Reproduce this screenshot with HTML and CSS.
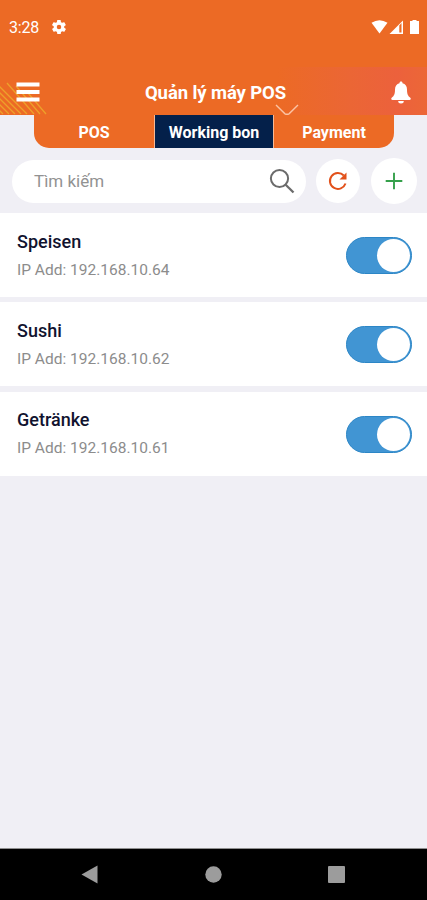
FILE: index.html
```html
<!DOCTYPE html>
<html lang="vi">
<head>
<meta charset="utf-8">
<title>Quản lý máy POS</title>
<link rel="stylesheet" href="styles.css">
</head>
<body>
<div class="app">
  <header class="header">
    <div class="status">
      <span class="time">3:28</span>
      <svg class="gear" width="14" height="14" viewBox="2 2 20 20" fill="#fff"><path d="M19.4 13a7.5 7.5 0 0 0 0-2l2.1-1.6a.5.5 0 0 0 .1-.7l-2-3.4a.5.5 0 0 0-.6-.2l-2.5 1a7 7 0 0 0-1.7-1l-.4-2.7a.5.5 0 0 0-.5-.4h-4a.5.5 0 0 0-.5.4L9 5.1a7 7 0 0 0-1.7 1l-2.5-1a.5.5 0 0 0-.6.2l-2 3.4a.5.5 0 0 0 .1.7L4.500 11a7.500 7.500 0 0 0 0 2l-2.100 1.600a.5.5 0 0 0-.1.7l2 3.400a.5.5 0 0 0 .6.2l2.500-1a7 7 0 0 0 1.700 1l.4 2.700a.5.5 0 0 0 .5.4h4a.5.5 0 0 0 .5-.4l.4-2.700a7 7 0 0 0 1.700-1l2.500 1a.5.5 0 0 0 .6-.2l2-3.400a.5.5 0 0 0-.1-.7zM12 15.200a3.200 3.200 0 1 1 0-6.400 3.200 3.200 0 0 1 0 6.400z"/></svg>
      <svg class="signals" width="50" height="16" viewBox="371 19 50 16" fill="#fff"><path d="M371.500 22.800Q379.500 17.500 387.500 22.800L379.500 33.500z"/><path d="M403 20.500V34H389.500z"/><path d="M399.300 25.500v7h2.200v-9.500z" fill="#ec6a25"/><path d="M412.500 20h4v1h2.500v13h-9V21h2.500z"/></svg>
    </div>
    <div class="titlebar">
      <svg class="stripes" width="52" height="36" viewBox="0 0 52 36" fill="none" stroke="#eda02a" stroke-width="1.300"><path d="M-2 6l29 29M-2 12l23 23M-2 18l17 17M-2 24l11 11M-2 30l5 5M7 4l27 31M16 7l24 28M28 14l18 21"/></svg>
      <svg class="menu" width="24" height="20" viewBox="0 0 24 20" fill="#fff"><path d="M.5.500h23v4H.5zM.5 8h23v4H.5zM.5 15.500h23v4H.5z"/></svg>
      <h1>Quản lý máy POS</h1>
      <svg class="bell" width="20" height="23" viewBox="0 0 20 23" fill="#fff"><path d="M10 .5c1 0 1.500.6 1.500 1.700 3 .8 4.500 3 4.500 6.300 0 4.800 1 6.500 3.300 8.200.8.700.6 2.300-.7 2.300H1.400C.1 19-.1 17.400.7 16.700 3 15 4 13.300 4 8.500c0-3.300 1.500-5.500 4.500-6.300C8.500 1.100 9 .5 10 .5zM7.200 20h5.600a2.800 2.500 0 0 1-5.600 0z"/></svg>
      <svg class="chevron" width="24" height="11" viewBox="0 0 24 11" fill="none" stroke="#fbc3a4" stroke-width="1.400"><path d="M1 1l9 8.800q2 1 4 0L23 1"/></svg>
    </div>
  </header>
  <nav class="tabs">
    <div class="tab">POS</div>
    <div class="tab active">Working bon</div>
    <div class="tab">Payment</div>
  </nav>
  <div class="tools">
    <div class="search">
      <span>Tìm kiếm</span>
      <svg width="26" height="26" viewBox="0 0 26 26" fill="none" stroke="#6b6b6b" stroke-width="2"><circle cx="10.500" cy="10.500" r="8.600"/><path d="M16.700 16.700l7.800 7.800" stroke-width="2.300"/></svg>
    </div>
    <div class="round refresh">
      <svg width="20" height="20" viewBox="0 0 20 20" fill="none" stroke="#e2511b" stroke-width="2"><path d="M17.500 12.500A8 8 0 1 1 15.800 4.500"/><path d="M18.500 1.500v7h-7z" fill="#e2511b" stroke="none"/></svg>
    </div>
    <div class="round add">
      <svg width="18" height="18" viewBox="0 0 18 18" stroke="#35a04b" stroke-width="1.900"><path d="M9 .7v16.600M.7 9h16.600"/></svg>
    </div>
  </div>
  <main class="list">
    <div class="card"><div><h2>Speisen</h2><p>IP Add: 192.168.10.64</p></div><div class="toggle"><i></i></div></div>
    <div class="card"><div><h2>Sushi</h2><p>IP Add: 192.168.10.62</p></div><div class="toggle"><i></i></div></div>
    <div class="card"><div><h2>Getränke</h2><p>IP Add: 192.168.10.61</p></div><div class="toggle"><i></i></div></div>
  </main>
  <footer class="navbar">
    <svg width="17" height="19" viewBox="0 0 17 19" fill="#9c9c9c"><path d="M.5 9.500L16.500.500v18z"/></svg>
    <svg width="17" height="17" viewBox="0 0 17 17" fill="#9c9c9c"><circle cx="8.500" cy="8.500" r="8.200"/></svg>
    <svg width="17" height="17" viewBox="0 0 17 17" fill="#9c9c9c"><rect width="17" height="17" rx="1"/></svg>
  </footer>
</div>
</body>
</html>
```
FILE: styles.css
```css
* { box-sizing: border-box; }
body { margin: 0; font-family: Roboto, "Liberation Sans", sans-serif; }
h1, h2, p { margin: 0; }
svg { display: block; flex: none; }
.app {
  width: 427px;
  height: 900px;
  display: flex;
  flex-direction: column;
  background: #f0eff5;
  overflow: hidden;
}
.header { height: 115px; flex: none; background: #ec6a25; }
.status {
  height: 67px;
  padding: 0 6px 13px 9px;
  display: flex;
  align-items: center;
  color: #fff;
}
.time { font-size: 16px; line-height: 20px; width: 43px; letter-spacing: -0.2px; padding-top: 2px; }
.signals { margin-left: auto; }
.titlebar {
  height: 48px;
  position: relative;
  display: flex;
  align-items: center;
  justify-content: space-between;
  padding: 2px 16px 0;
  background: linear-gradient(90deg, rgba(236, 103, 48, 0) 65%, #eb6635 82%, #ec613c 93%, #ec6737);
}
.stripes { position: absolute; left: 0; bottom: 0; }
.menu { position: relative; }
.titlebar h1 {
  color: #fff;
  font-size: 18.500px;
  line-height: 24px;
  font-weight: 700;
  letter-spacing: -0.1px;
  padding-top: 2px;
}
.chevron { position: absolute; left: 275px; bottom: 0; }
.tabs {
  flex: none;
  width: 360px;
  height: 33px;
  margin-left: 34px;
  display: grid;
  grid-template-columns: 120px 120px 120px;
  background: #ec6a25;
  border-radius: 0 0 15px 15px;
  overflow: hidden;
}
.tab {
  color: #fff;
  font-size: 16px;
  font-weight: 700;
  line-height: 36px;
  text-align: center;
}
.active {
  height: 33px;
  background: #04204a;
  border: solid #f5b996;
  border-width: 0 1px;
}
.tools {
  flex: none;
  height: 65px;
  display: flex;
  align-items: center;
  padding: 1px 10px 0 12px;
}
.search {
  width: 294px;
  height: 43px;
  border-radius: 22px;
  background: #fff;
  display: flex;
  align-items: center;
  justify-content: space-between;
  padding: 0 11px 0 22px;
  color: #929292;
  font-size: 17px;
}
.round {
  border-radius: 50%;
  background: #fff;
  display: flex;
  align-items: center;
  justify-content: center;
}
.refresh { width: 44px; height: 44px; margin-left: 10px; }
.add { width: 46px; height: 46px; margin-left: 11px; }
.list { flex: 1; display: flex; flex-direction: column; gap: 5.300px; }
.card {
  height: 84px;
  background: #fff;
  display: flex;
  align-items: center;
  justify-content: space-between;
  padding: 1px 15px 0 17px;
}
.card h2 { font-size: 18px; line-height: 28px; font-weight: 500; color: #11132f; }
.card p { font-size: 15.500px; line-height: 28px; color: #8c8c8c; }
.toggle {
  width: 66px;
  height: 37px;
  border-radius: 19px;
  background: #4195d3;
  border: 1px solid #2c86c6;
  display: flex;
  justify-content: flex-end;
  align-items: center;
  padding-right: 1px;
}
.toggle i { width: 33px; height: 33px; border-radius: 50%; background: #fff; }
.navbar {
  flex: none;
  height: 52px;
  background: #000;
  border-top: 1px solid #8f8f8f;
  display: flex;
  align-items: center;
  justify-content: space-between;
  padding: 0 82px 0 81px;
}
```
